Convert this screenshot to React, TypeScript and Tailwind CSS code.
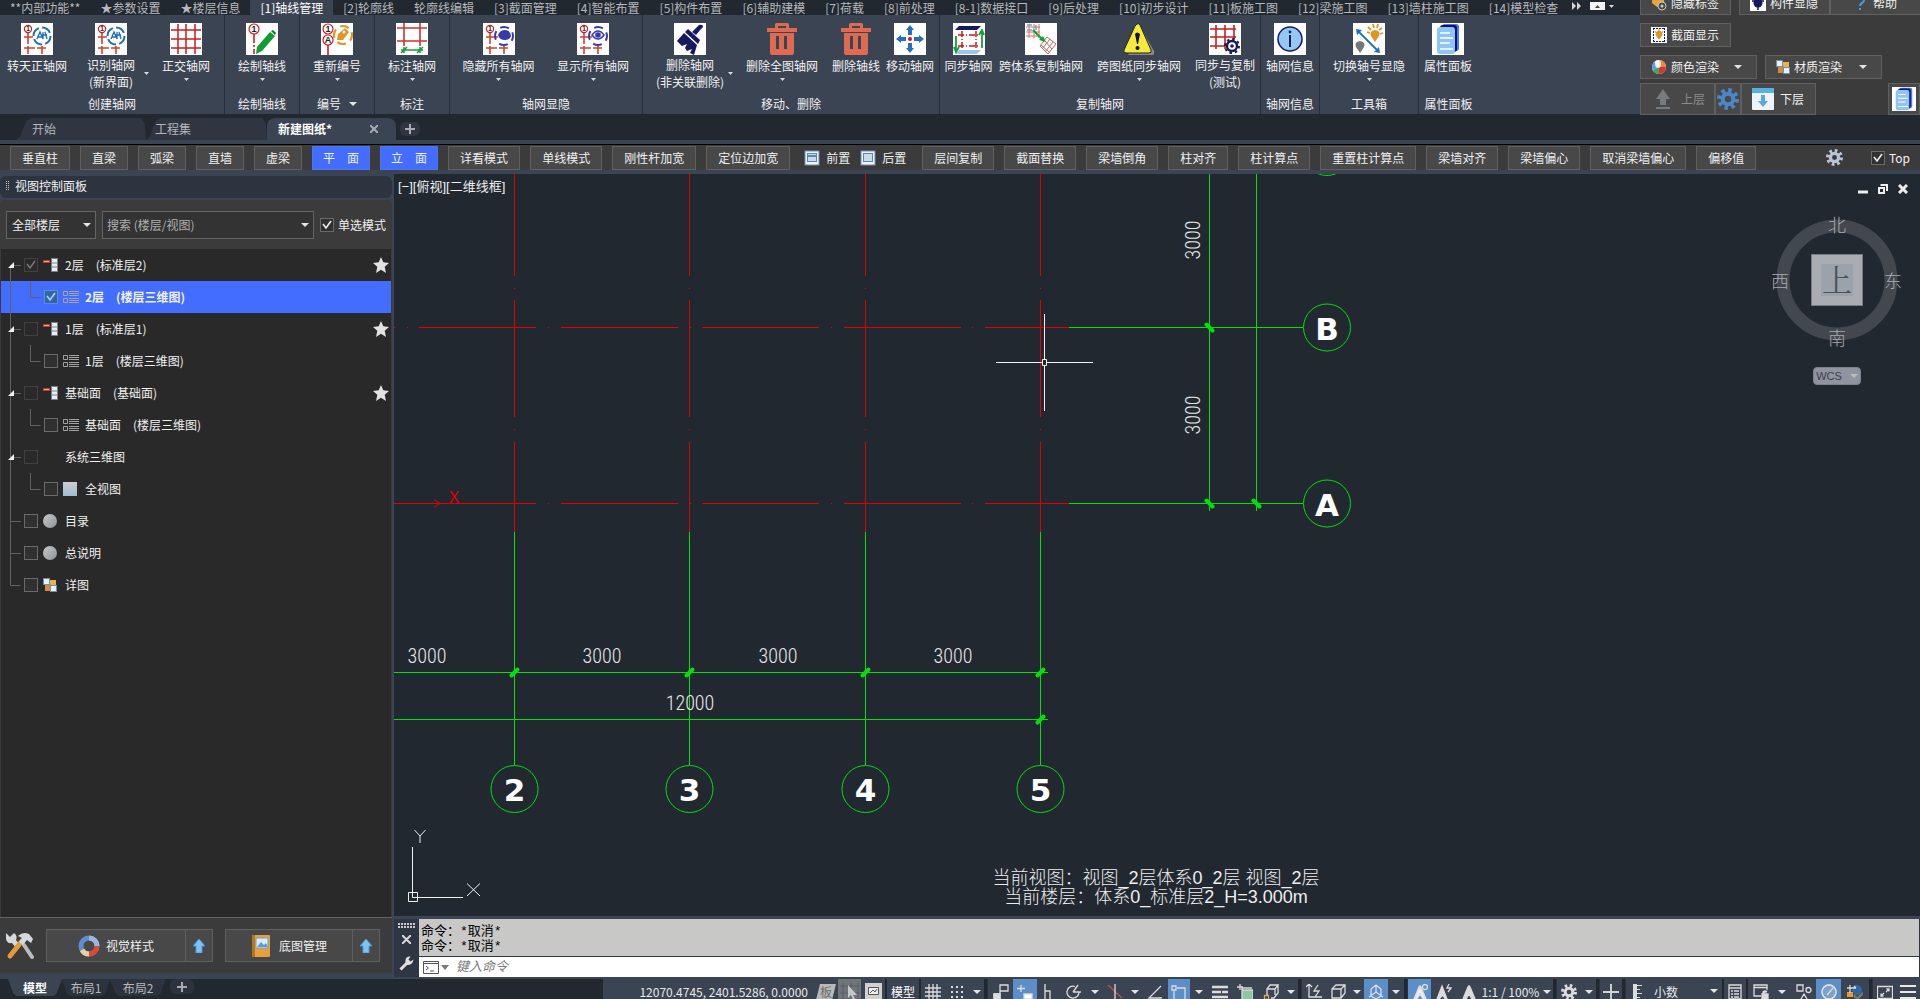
import { useState } from 'react';
import type { ReactNode } from 'react';

type IconName = keyof typeof ribbonIcons;

interface RibbonItem {
     label: string[];
     icon: IconName;
     width: string;
     menu?: boolean;
}

interface RibbonGroup {
     title: string;
     width: string;
     menu?: boolean;
     items: RibbonItem[];
}

interface TreeNode {
     label: string;
     kind: 'floor' | 'list' | 'none' | 'view' | 'sheet' | 'detail';
     child?: boolean;
     open?: boolean;
     checked?: boolean;
     dim?: boolean;
     star?: boolean;
     selected?: boolean;
     last?: boolean;
}

const Bubble = ({ x, y, r, text }: { x: number; y: number; r: number; text: string }) => (
     <>
          <circle cx={x} cy={y} r={r} fill="#fff" stroke="#cc1f1f" strokeWidth="1.2" />
          <text x={x} y={y + r / 1.6} textAnchor="middle" fontSize={r * 1.8} fontWeight="700" fill="#222" className="font-['Liberation_Sans',sans-serif]">{text}</text>
     </>
);

const AxisBase = () => (
     <>
          <path d="M7 9v12M3 14h9M7 23v8M3 25h9M12 25h2M16 25h9M21 23v8M13 14h2" stroke="#d2402f" strokeWidth="1.6" fill="none" />
          <Bubble x={7} y={6} r={3.6} text="1" />
     </>
);

const RecognizeIcon = () => (
     <>
          <AxisBase />
          <circle cx="21" cy="13" r="8.5" fill="#fff" stroke="#1d6fb8" strokeWidth="2" strokeDasharray="10 3.3" />
          <path d="M16 16l3-7 3 7M17 14h4M22 9v7M24 9l2 7M20 12h6" stroke="#1d6fb8" strokeWidth="1.3" fill="none" />
     </>
);

const Trash = () => (
     <>
          <path d="M9 5V1.5Q9 0 10.500 0h11Q23 0 23 1.500V5h8v4H1V5zM12 5h8V3h-8z" fill="#df6a52" fillRule="evenodd" />
          <path d="M4 10h24v20q0 2-2 2H6q-2 0-2-2zM10 13v13h3V13zM18 13v13h3V13z" fill="#df6a52" fillRule="evenodd" />
     </>
);

const DocIcon = () => (
     <>
          <rect x="10" y="1" width="17" height="27" rx="3" fill="#4776ff" />
          <rect x="8" y="2" width="17" height="27" rx="3" fill="#10126a" />
          <rect x="5" y="4" width="18" height="27" rx="3" fill="#8ec5f2" />
          <path d="M8 10h10M8 15h13M8 20h10M8 26h13" stroke="#fff" strokeWidth="1.500" />
     </>
);

const EyeRing = () => (
     <circle cx="21" cy="13" r="9" fill="none" stroke="#3b3ba8" strokeWidth="2" strokeDasharray="9 5.1" strokeDashoffset="4" />
);

const ribbonIcons = {
     recognize: <RecognizeIcon />,
     grid: <path d="M8 1v30M16 1v30M25 1v30M1 7h30M1 16h30M1 25h30" stroke="#c81e1e" strokeWidth="1.500" fill="none" />,
     draw: (
          <>
               <path d="M8 11v9M8 22v2M8 26v5" stroke="#cc1f1f" strokeWidth="1.600" />
               <Bubble x={8} y={6} r={5} text="1" />
               <path d="M24 9l5 4-13 15-6 3 1-7z" fill="#0f9d33" />
               <path d="M25 8l2-1 3 3-1 2z" fill="#0b7a27" />
          </>
     ),
     renumber: (
          <>
               <path d="M7 21v11" stroke="#cc1f1f" strokeWidth="1.600" />
               <circle cx="22" cy="12" r="9" fill="none" stroke="#dd9624" strokeWidth="2.200" strokeDasharray="9 5.1" strokeDashoffset="3" />
               <path d="M16 17l1-6 7-6 4 4-6 8z" fill="#dd9624" />
               <circle cx="23" cy="9" r="1.500" fill="#fff" />
               <Bubble x={7} y={6} r={5} text="1" />
               <Bubble x={7} y={17} r={5} text="A" />
          </>
     ),
     dimension: (
          <>
               <path d="M8 0v23M24 0v23M1 5h30M1 18h30" stroke="#d03030" strokeWidth="1.600" />
               <path d="M5 27h22M8 24v6M24 24v6M5 30l6-6M21 30l6-6" stroke="#12a035" strokeWidth="1.500" />
          </>
     ),
     hide: (
          <>
               <AxisBase />
               <EyeRing />
               <path d="M15 12q2-5 7-5t6 6q-1 4-6 4-6 0-7-5z" fill="#3b3ba8" />
          </>
     ),
     show: (
          <>
               <AxisBase />
               <EyeRing />
               <path d="M15 12q6-8 12 0-6 8-12 0z" fill="#fff" stroke="#3b3ba8" strokeWidth="1.500" />
               <circle cx="21" cy="12" r="2.800" fill="#3b3ba8" />
          </>
     ),
     brush: (
          <>
               <path d="M18 9l7-7q3-1 4 1 0 2-2 3l-5 6z" fill="#15195f" />
               <path d="M14 6l12 11-2 4L11 9z" fill="#15195f" />
               <path d="M10 10l13 12-3 10-4-2 2-4-5 2-2-3 2-4-5 2-5-5z" fill="#15195f" />
          </>
     ),
     trash: <Trash />,
     move: (
          <>
               <path d="M16 2l4 5h-2v5h-4V7h-2zM16 30l4-5h-2v-5h-4v5h-2zM2 16l5-4v2h5v4H7v2zM30 16l-5-4v2h-5v4h5v2z" fill="#2470bd" />
               <circle cx="16" cy="16" r="2" fill="#e01010" />
          </>
     ),
     sync: (
          <>
               <path d="M6 3h22l-4 4H2z" fill="#15195f" />
               <path d="M6 27h22l-4 4H2z" fill="#9ac9ea" />
               <path d="M9 8v18M23 8v18M5 12h22M5 23h22" stroke="#d01616" strokeWidth="1.500" strokeDasharray="6 2 1 2" />
               <path d="M3 13v15M1 24l2 5 3-5M29 25V8M26 12l3-5 2 5" stroke="#12a035" strokeWidth="1.800" fill="none" />
          </>
     ),
     copySystem: (
          <>
               <path d="M4 1v14M9 1v14M14 1v14M1 4h14M1 9h14M1 13h14" stroke="#d97361" strokeWidth="1" />
               <path d="M2 2h5M2 7h5M11 2v5" stroke="#62a8dc" strokeWidth="1.500" />
               <path d="M22 14l9 7-8 10-8-8zM19 17l8 9M25 16l-8 10M28 19l-8 10M16 22l8 7" stroke="#bb6c5a" fill="none" />
               <path d="M8 7l11 11" stroke="#12a035" strokeWidth="2" />
               <path d="M21 19l-7-2 4-4z" fill="#12a035" />
          </>
     ),
     warning: (
          <>
               <path d="M17 3l14 25q1 4-2 4H5z" fill="#8a8a82" />
               <path d="M14 1q2-1 3 1l11 25q1 3-2 3H3q-3 0-2-3L12 3z" fill="#f8ea3c" stroke="#222" strokeWidth="1" />
               <path d="M12 11q2-3 5 0l-2 10h-1z" fill="#111" />
               <circle cx="14.500" cy="25" r="2" fill="#111" />
          </>
     ),
     copyTest: (
          <>
               <path d="M7 2v24M16 2v24M25 2v14M1 6h26M1 14h26M1 23h15" stroke="#c81e1e" strokeWidth="1.600" />
               <circle cx="23" cy="23" r="5" fill="#fff" stroke="#15195f" strokeWidth="2.400" />
               <circle cx="23" cy="23" r="7" fill="none" stroke="#15195f" strokeWidth="2" strokeDasharray="2.500 3" />
               <circle cx="23" cy="23" r="1.800" fill="#15195f" />
          </>
     ),
     info: (
          <>
               <circle cx="16" cy="16" r="12" fill="#93c8f3" stroke="#15195f" strokeWidth="1.500" />
               <path d="M16 12v12" stroke="#15195f" strokeWidth="2" fill="none" />
               <circle cx="16" cy="9" r="1.400" fill="#15195f" />
          </>
     ),
     toggle: (
          <>
               <path d="M5 8l20 20" stroke="#1d6fb8" strokeWidth="1.800" />
               <path d="M3 6l6 1-5 5zM27 30l-6-1 5-5z" fill="#1d6fb8" />
               <path d="M22 19l-4-6q-2-5 4-6 6 1 4 6z" fill="#dd9624" />
               <path d="M14 9l3 1M15 4l3 3M20 1l1 4M25 1l-1 4M29 5l-3 2M30 10l-3 1" stroke="#dd9624" strokeWidth="1.800" />
               <path d="M7 30l-4-6q-2-5 4-6 6 1 4 6z" fill="#777" />
          </>
     ),
     doc: <DocIcon />,
};

const ribbonGroups: RibbonGroup[] = [
     {
          title: '创建轴网', width: 'w-[225px]', items: [
               { label: ['转天正轴网'], icon: 'recognize', width: 'w-[74px]' },
               { label: ['识别轴网', '(新界面)'], icon: 'recognize', width: 'w-[74px]', menu: true },
               { label: ['正交轴网'], icon: 'grid', width: 'w-[76px]', menu: true },
          ],
     },
     { title: '绘制轴线', width: 'w-[75px]', items: [{ label: ['绘制轴线'], icon: 'draw', width: 'w-[74px]', menu: true }] },
     { title: '编号', width: 'w-[75px]', menu: true, items: [{ label: ['重新编号'], icon: 'renumber', width: 'w-[74px]', menu: true }] },
     { title: '标注', width: 'w-[75px]', items: [{ label: ['标注轴网'], icon: 'dimension', width: 'w-[74px]', menu: true }] },
     {
          title: '轴网显隐', width: 'w-[193px]', items: [
               { label: ['隐藏所有轴网'], icon: 'hide', width: 'w-[97px]', menu: true },
               { label: ['显示所有轴网'], icon: 'show', width: 'w-[92px]', menu: true },
          ],
     },
     {
          title: '移动、删除', width: 'w-[297px]', items: [
               { label: ['删除轴网', '(非关联删除)'], icon: 'brush', width: 'w-[94px]', menu: true },
               { label: ['删除全图轴网'], icon: 'trash', width: 'w-[90px]', menu: true },
               { label: ['删除轴线'], icon: 'trash', width: 'w-[58px]' },
               { label: ['移动轴网'], icon: 'move', width: 'w-[50px]' },
          ],
     },
     {
          title: '复制轴网', width: 'w-[321px]', items: [
               { label: ['同步轴网'], icon: 'sync', width: 'w-[57px]' },
               { label: ['跨体系复制轴网'], icon: 'copySystem', width: 'w-[88px]' },
               { label: ['跨图纸同步轴网'], icon: 'warning', width: 'w-[108px]', menu: true },
               { label: ['同步与复制', '(测试)'], icon: 'copyTest', width: 'w-[64px]' },
          ],
     },
     { title: '轴网信息', width: 'w-[59px]', items: [{ label: ['轴网信息'], icon: 'info', width: 'w-[58px]' }] },
     { title: '工具箱', width: 'w-[99px]', items: [{ label: ['切换轴号显隐'], icon: 'toggle', width: 'w-[98px]', menu: true }] },
     { title: '属性面板', width: 'w-[59px]', items: [{ label: ['属性面板'], icon: 'doc', width: 'w-[58px]' }] },
];

const menuTabs = [
     '**内部功能**', '★参数设置', '★楼层信息', '[1]轴线管理', '[2]轮廓线', '轮廓线编辑', '[3]截面管理', '[4]智能布置',
     '[5]构件布置', '[6]辅助建模', '[7]荷载', '[8]前处理', '[8-1]数据接口', '[9]后处理', '[10]初步设计', '[11]板施工图',
     '[12]梁施工图', '[13]墙柱施工图', '[14]模型检查',
];

const toolsLeft = ['垂直柱', '直梁', '弧梁', '直墙', '虚梁', '平\u3000面', '立\u3000面', '详看模式', '单线模式', '刚性杆加宽', '定位边加宽'];
const toolsRight = ['层间复制', '截面替换', '梁墙倒角', '柱对齐', '柱计算点', '重置柱计算点', '梁墙对齐', '梁墙偏心', '取消梁墙偏心', '偏移值'];

const tree: TreeNode[] = [
     { label: '2层\u3000(标准层2)', kind: 'floor', open: true, checked: true, dim: true, star: true },
     { label: '2层\u3000(楼层三维图)', kind: 'list', child: true, checked: true, selected: true },
     { label: '1层\u3000(标准层1)', kind: 'floor', open: true, dim: true, star: true },
     { label: '1层\u3000(楼层三维图)', kind: 'list', child: true },
     { label: '基础面\u3000(基础面)', kind: 'floor', open: true, dim: true, star: true },
     { label: '基础面\u3000(楼层三维图)', kind: 'list', child: true },
     { label: '系统三维图', kind: 'none', open: true, dim: true },
     { label: '全视图', kind: 'view', child: true },
     { label: '目录', kind: 'sheet' },
     { label: '总说明', kind: 'sheet' },
     { label: '详图', kind: 'detail', last: true },
];

const Caret = ({ small }: { small?: boolean }) => (
     small
          ? <svg width="5" height="3" viewBox="0 0 5 3" className="shrink-0"><path d="M0 0h5L2.500 3z" fill="#d8d8d8" /></svg>
          : <svg width="8" height="4" viewBox="0 0 8 4" className="shrink-0"><path d="M0 0h8L4 4z" fill="#e4e4e4" /></svg>
);

const Gear = ({ size, color, hole }: { size: number; color: string; hole: string }) => (
     <svg width={size} height={size} viewBox="0 0 24 24" className="shrink-0">
          <circle cx="12" cy="12" r="9.500" fill="none" stroke={color} strokeWidth="5" strokeDasharray="3.730 3.730" />
          <circle cx="12" cy="12" r="8" fill={color} />
          <circle cx="12" cy="12" r="3.500" fill={hole} />
     </svg>
);

const Plus = () => (
     <svg width="10" height="10" viewBox="0 0 10 10"><path d="M5 0v10M0 5h10" stroke="#a8acb2" strokeWidth="2" /></svg>
);

const CheckBox = ({ id, label, checked, dim, blue }: { id: string; label?: string; checked?: boolean; dim?: boolean; blue?: boolean }) => (
     <span className="relative flex size-[14px] shrink-0">
          <input
               id={id}
               type="checkbox"
               aria-label={label}
               defaultChecked={checked}
               className={`peer size-[14px] appearance-none border ${blue ? 'border-[#5c8fd0] bg-[#3265ad]' : dim ? 'border-[#414141] bg-[#2b2929]' : 'border-[#6a6a6a] bg-[#303030]'}`}
          />
          <svg viewBox="0 0 14 14" className="pointer-events-none absolute inset-0 hidden size-[14px] peer-checked:block">
               <path d="M3 6l3 4 5-7" fill="none" stroke={dim ? '#777' : blue ? '#a9d4ff' : '#f0f0f0'} strokeWidth="1.600" />
          </svg>
     </span>
);

function RibbonButton({ item }: { item: RibbonItem }) {
     const twoLines = item.label.length > 1;
     const bare = item.icon === 'trash' || item.icon === 'warning';
     return (
          <button className={`relative flex shrink-0 flex-col items-center ${item.width}`}>
               <svg width="32" height="32" viewBox="0 0 32 32" className={bare ? '' : 'bg-white'}>{ribbonIcons[item.icon]}</svg>
               <span className={`flex flex-col items-center whitespace-nowrap ${twoLines ? 'mt-px leading-[17px]' : 'mt-[2px] leading-[18px]'}`}>
                    {item.label.map((line) => <span key={line}>{line}</span>)}
               </span>
               {item.menu && !twoLines && <span className="mt-[3px]"><Caret small /></span>}
               {item.menu && twoLines && <span className={`absolute top-[49px] ${item.icon === 'brush' ? 'right-[4px]' : '-right-[1px]'}`}><Caret small /></span>}
          </button>
     );
}

function Ribbon() {
     const [active, setActive] = useState('[1]轴线管理');
     return (
          <div className="flex min-w-0 flex-1 flex-col">
               <div className="flex h-[15px] items-start overflow-hidden bg-[#212830] text-[#b6b9bd]">
                    {menuTabs.map((tab) => (
                         <button
                              key={tab}
                              onClick={() => setActive(tab)}
                              className={`-mt-px h-4 shrink-0 px-[10px] leading-[13px] whitespace-nowrap ${active === tab ? 'bg-[#3b4453] text-white' : ''}`}
                         >
                              {tab}
                         </button>
                    ))}
                    <svg width="48" height="15" viewBox="0 0 48 15" className="ml-1 shrink-0">
                         <path d="M0 2l4 4-4 4zM5 2l4 4-4 4z" fill="#d8d8d8" />
                         <rect x="18" y="2" width="15" height="8" fill="#f2f2f2" />
                         <path d="M23 8h5l-2.500-3z" fill="#444" />
                         <path d="M37 5h5l-2.500 3z" fill="#d8d8d8" />
                    </svg>
               </div>
               <div className="flex h-[99px] bg-[#3b4453]">
                    {ribbonGroups.map((group, index) => (
                         <div key={group.title} className={`flex shrink-0 flex-col pt-2 ${group.width} ${index < ribbonGroups.length - 1 ? 'border-r border-[#262d37]' : ''}`}>
                              <div className="flex h-[72px]">
                                   {group.items.map((item) => <RibbonButton key={item.label[0]} item={item} />)}
                              </div>
                              <div className="flex items-center justify-center gap-2 leading-[18px]">
                                   {group.title}
                                   {group.menu && <Caret />}
                              </div>
                         </div>
                    ))}
               </div>
          </div>
     );
}

const panelButton = 'flex shrink-0 items-center border border-[#606060] bg-[#484848]';

function SideTools() {
     return (
          <div className="flex h-[115px] w-[280px] shrink-0 flex-col overflow-hidden bg-[#3b3b3b]">
               <div className="flex h-[15px] items-end gap-2">
                    <button className={`${panelButton} h-6 w-[91px] gap-1 pl-[10px]`}>
                         <svg width="16" height="16" viewBox="0 0 16 16"><path d="M1 0h12v8L6 12 1 8z" fill="#e3a53c" /><circle cx="11" cy="11" r="4" fill="#484848" stroke="#c9c9c9" /><circle cx="11" cy="11" r="1.500" fill="#c9c9c9" /></svg>
                         隐藏标签
                    </button>
                    <div className="flex">
                         <button className={`${panelButton} h-6 w-[91px] gap-1 pl-[10px]`}>
                              <svg width="16" height="16" viewBox="0 0 16 16" className="bg-white"><circle cx="8" cy="8" r="4.500" fill="#15195f" /><path d="M8 1v14M2 6h12" stroke="#15195f" strokeWidth="1.500" /></svg>
                              构件显隐
                         </button>
                         <button className={`${panelButton} h-6 w-[91px] gap-2 pl-6`}>
                              <svg width="10" height="16" viewBox="0 0 10 16" fill="none"><path d="M1 5Q1 1 5 1t4 4q0 2-2 3-2 1-2 3M5 13v2" stroke="#4a9ae0" strokeWidth="2" /></svg>
                              帮助
                         </button>
                    </div>
               </div>
               <div className="mt-2 flex h-6">
                    <button className={`${panelButton} w-[91px] gap-1 pl-[10px]`}>
                         <svg width="16" height="16" viewBox="0 0 16 16" className="bg-white"><path d="M2.500 1v14M13.500 1v14M2 1.500h12M2 14.500h12" stroke="#15195f" strokeDasharray="2 1" /><path d="M8 12L5 8q0-4 3-4t3 4zM4 4l1 2M8 2v3M12 4l-1 2" fill="#dd9624" stroke="#dd9624" /></svg>
                         截面显示
                    </button>
               </div>
               <div className="mt-2 flex h-6 gap-2">
                    <button className={`${panelButton} w-[117px] gap-1 pl-[10px]`}>
                         <svg width="16" height="16" viewBox="0 0 16 16"><circle cx="8" cy="8" r="7" fill="#e8eef4" /><path d="M8 8L8 1a7 7 0 0 1 7 7z" fill="#e98a3a" /><path d="M8 8h7a7 7 0 0 1-7 7z" fill="#d33" /><path d="M8 8v7a7 7 0 0 1-6-4z" fill="#3fa65a" /><path d="M8 8L2 11a7 7 0 0 1 1-8z" fill="#5d9bd8" /><ellipse cx="7" cy="5" rx="3" ry="4" fill="#fff" opacity=".8" /></svg>
                         <span className="flex-1 text-left">颜色渲染</span>
                         <span className="mr-[14px]"><Caret /></span>
                    </button>
                    <button className={`${panelButton} w-[117px] gap-1 pl-[10px]`}>
                         <BlocksIcon />
                         <span className="flex-1 text-left">材质渲染</span>
                         <span className="mr-[14px]"><Caret /></span>
                    </button>
               </div>
               <div className="mt-1 flex h-8 items-stretch">
                    <button className={`${panelButton} w-[75px] gap-2 border-[#4c4c4c] bg-[#414141] pl-3 text-[#8a8a8a]`}>
                         <svg width="20" height="20" viewBox="0 0 20 20"><path d="M10 0l7 10h-4v6H7v-6H3z" fill="#777a7e" /><path d="M3 19h14" stroke="#777a7e" strokeWidth="2" /></svg>
                         上层
                    </button>
                    <button aria-label="楼层设置" className={`${panelButton} w-[26px] justify-center`}><Gear size={22} color="#4c86c6" hole="#484848" /></button>
                    <button className={`${panelButton} w-[75px] gap-[6px] pl-[10px]`}>
                         <svg width="22" height="22" viewBox="0 0 22 22"><rect width="22" height="22" rx="1" fill="#eef4fa" /><path d="M0 0h22v5H0z" fill="#57b2e0" /><path d="M9 7h4v6h3l-5 6-5-6h3z" fill="#5ba7dc" /></svg>
                         下层
                    </button>
                    <button aria-label="属性面板" className={`${panelButton} ml-auto w-8 justify-center`}>
                         <svg width="24" height="24" viewBox="0 0 32 32" className="bg-white"><DocIcon /></svg>
                    </button>
               </div>
          </div>
     );
}

const BlocksIcon = () => (
     <svg width="14" height="14" viewBox="0 0 14 14" className="shrink-0">
          <rect x="6" y="2" width="7" height="7" fill="#e9b44c" />
          <rect x="2" y="6" width="6" height="7" fill="#d68a3c" />
          <rect x="0.500" y="0.500" width="6" height="6" fill="#eaf1f8" stroke="#6f8fb8" />
          <rect x="7.500" y="7.500" width="6" height="6" fill="#eaf1f8" stroke="#6f8fb8" />
     </svg>
);

function FileTabs() {
     const shape = '[clip-path:polygon(0_100%,3%_85%,8%_12%,12%_0,96%_0,99%_20%,100%_100%)]';
     return (
          <div className="flex h-[25px] shrink-0 items-end bg-[#212830] pl-4">
               <button className={`h-[22px] w-[130px] bg-[#2f3641] pl-4 text-left text-[#b4b7bb] ${shape}`}>开始</button>
               <button className={`h-[22px] w-[121px] bg-[#2f3641] pl-[9px] text-left text-[#b4b7bb] ${shape}`}>工程集</button>
               <div className="flex h-[22px] w-[129px] items-center rounded-t-lg bg-[#3b4453] pl-[11px]">
                    <button className="flex-1 text-left font-bold text-white">新建图纸*</button>
                    <button aria-label="关闭" className="mr-[18px]">
                         <svg width="8" height="8" viewBox="0 0 8 8"><path d="M0 0l8 8M8 0L0 8" stroke="#a8acb2" strokeWidth="2" /></svg>
                    </button>
               </div>
               <button aria-label="新建" className="mb-1 ml-1 flex h-[14px] w-5 items-center justify-center rounded-md bg-[#2f3641]"><Plus /></button>
          </div>
     );
}

function ToolBar() {
     const normal = 'h-6 shrink-0 border border-[#606060] bg-[#484848] px-[11px] whitespace-nowrap';
     const picked = 'h-6 shrink-0 border border-[#4f74ee] bg-[#426dff] px-[10px] whitespace-nowrap';
     return (
          <div className="flex h-[26px] shrink-0 items-center overflow-hidden border-t border-black bg-[#3b3b3b] pl-[10px]">
               <div className="flex shrink-0 gap-[10px]">
                    {toolsLeft.map((tool) => <button key={tool} className={tool.includes('\u3000') ? picked : normal}>{tool}</button>)}
               </div>
               {['前置', '后置'].map((tool, index) => (
                    <button key={tool} className={`flex shrink-0 items-center gap-[6px] ${index === 0 ? 'ml-[14px]' : 'ml-[10px]'}`}>
                         <svg width="16" height="16" viewBox="0 0 16 16">
                              <rect x="1" y="1" width="14" height="14" fill="#f2f5f8" stroke="#6f8fb8" />
                              <rect x="3.500" y="3.500" width="9" height="8" fill="#c9dcec" stroke="#5b86b5" />
                              {index === 0 && <path d="M4 6h8" stroke="#5b86b5" strokeWidth="2" />}
                         </svg>
                         {tool}
                    </button>
               ))}
               <div className="ml-4 flex shrink-0 gap-[10px]">
                    {toolsRight.map((tool) => <button key={tool} className={normal}>{tool}</button>)}
               </div>
               <button aria-label="设置" className="ml-auto"><Gear size={17} color="#b9c4d6" hole="#3b3b3b" /></button>
               <span className="mr-[10px] ml-7 flex shrink-0 items-center gap-1">
                    <CheckBox id="top" checked />
                    <label htmlFor="top">Top</label>
               </span>
          </div>
     );
}

function NodeIcon({ kind }: { kind: TreeNode['kind'] }) {
     if (kind === 'floor') {
          return (
               <svg width="15" height="14" viewBox="0 0 15 14">
                    <path d="M0 3.500h7" stroke="#c23a2b" strokeWidth="3" /><path d="M1 3.500h5" stroke="#e8b07a" />
                    <path d="M8.500 .5h6v13h-6zM8.500 5h6M8.500 9h6" fill="#e9eef2" stroke="#77828e" />
               </svg>
          );
     }
     if (kind === 'list') {
          return (
               <svg width="16" height="14" viewBox="0 0 16 14">
                    <path d="M.5 1.500h4v4h-4zM.5 8.500h4v4h-4zM6 1.500h10M6 3.500h10M6 5.500h10M6 8.500h10M6 10.500h10M6 12.500h10" fill="none" stroke="#a3a3a3" />
               </svg>
          );
     }
     if (kind === 'view') {
          return <span className="block size-[14px] bg-linear-to-b from-[#cdcdd2] to-[#9dbdd0]" />;
     }
     if (kind === 'sheet') {
          return <span className="block size-[14px] rounded-full bg-linear-to-br from-[#c9c9c9] to-[#8f9297]" />;
     }
     if (kind === 'detail') {
          return <BlocksIcon />;
     }
     return <span className="block w-[15px]" />;
}

function TreeRow({ node }: { node: TreeNode }) {
     return (
          <li className={`flex h-8 items-center ${node.selected ? 'bg-[#426dff] font-bold' : ''}`}>
               {node.child ? (
                    <svg width="43" height="32" viewBox="0 0 43 32" className="shrink-0">
                         <path d="M9.500 0v32M29.500 0v16.500h10" fill="none" stroke="#626262" />
                    </svg>
               ) : (
                    <svg width="23" height="32" viewBox="0 0 23 32" className="shrink-0">
                         <path d={node.last ? 'M9.500 0v16.500h10' : node.star && node.checked ? 'M9.500 16v16M10 16.500h10' : 'M9.500 0v32M10 16.500h10'} fill="none" stroke="#626262" />
                         {node.open && <path d="M7 19h6v-6z" fill="#f0f0f0" />}
                    </svg>
               )}
               <CheckBox id={`node-${node.label}`} label={node.label} checked={node.checked} dim={node.dim} blue={node.selected} />
               <span className="ml-[5px] flex w-[22px] shrink-0"><NodeIcon kind={node.kind} /></span>
               <span className="flex-1">{node.label}</span>
               {node.star && (
                    <svg width="16" height="16" viewBox="0 0 16 16" className="mr-[2px] shrink-0">
                         <path d="M8 0l2.300 5.300 5.700.6-4.300 3.800 1.300 6.200L8 12.800 3 15.900l1.300-6.200L0 5.900l5.700-.6z" fill="#e2e2e2" />
                    </svg>
               )}
          </li>
     );
}

function ViewPanel() {
     return (
          <aside className="flex w-[392px] shrink-0 flex-col pt-[2px] pb-1">
               <div className="flex h-[22px] shrink-0 items-center gap-[6px] rounded-md bg-[#2d3440] pb-[2px] pl-[6px]">
                    <svg width="3" height="10" viewBox="0 0 3 10"><path d="M.5 0v10M2.500 0v10" stroke="#c8c8c8" strokeDasharray="1 1" /></svg>
                    视图控制面板
               </div>
               <div className="mt-[2px] flex min-h-0 flex-1 flex-col rounded-t-sm bg-[#3b3b3b]">
                    <div className="flex h-[49px] shrink-0 items-center gap-[6px] pl-[6px]">
                         <div className="relative w-[90px]">
                              <select aria-label="楼层" className="h-7 w-full appearance-none border border-[#646464] bg-[#333] pl-[5px]">
                                   <option>全部楼层</option>
                              </select>
                              <span className="pointer-events-none absolute top-3 right-[5px]"><Caret /></span>
                         </div>
                         <div className="relative w-[212px]">
                              <input aria-label="搜索" placeholder="搜索 (楼层/视图)" className="h-7 w-full border border-[#646464] bg-[#333] pl-1 placeholder:text-[#b0b0b0]" />
                              <span className="absolute top-3 right-[5px]"><Caret /></span>
                         </div>
                         <span className="flex items-center gap-1">
                              <CheckBox id="single" checked />
                              <label htmlFor="single">单选模式</label>
                         </span>
                    </div>
                    <ul className="mx-px flex-1 bg-[#292929]">
                         {tree.map((node) => <TreeRow key={node.label} node={node} />)}
                    </ul>
                    <div className="flex h-14 shrink-0 items-center border-t border-[#646464] pl-1">
                         <button aria-label="工具">
                              <svg width="31" height="28" viewBox="0 0 31 28">
                                   <path d="M20 13l8 12" stroke="#b8bcc2" strokeWidth="4" strokeLinecap="round" />
                                   <path d="M2 1l4 4 4-4q4 3 2 7l4 5-4 3-4-5q-5 1-6-4z" fill="#d5d9de" />
                                   <path d="M18 9L6 24" stroke="#e59a3a" strokeWidth="5" strokeLinecap="round" />
                                   <path d="M14 4q5-5 11-2l4 5-2 4-4-3-4 5-4-3 3-4z" fill="#d5d9de" />
                              </svg>
                         </button>
                         <div className="ml-[11px] flex h-[33px] w-[167px] border border-[#606060] bg-[#484848]">
                              <button className="flex flex-1 items-center justify-center gap-[6px]">
                                   <svg width="22" height="22" viewBox="0 0 22 22" fill="none" strokeWidth="5">
                                        <circle cx="11" cy="11" r="8" stroke="#5d8fd0" />
                                        <path d="M11 3a8 8 0 0 1 8 8" stroke="#9db7dc" />
                                        <path d="M19 11a8 8 0 0 1-8 8" stroke="#d84a35" />
                                        <path d="M11 19a8 8 0 0 1-7-4" stroke="#ead0a0" />
                                   </svg>
                                   视觉样式
                              </button>
                              <button aria-label="更多样式" className="flex w-[27px] items-center justify-center border-l border-[#606060]"><UpArrow /></button>
                         </div>
                         <div className="ml-3 flex h-[33px] w-[155px] border border-[#606060] bg-[#484848]">
                              <button className="flex flex-1 items-center justify-center gap-2">
                                   <svg width="20" height="22" viewBox="0 0 20 22"><rect x="1" width="18" height="22" rx="1" fill="#e6a03c" /><path d="M1 0h3v22H1z" fill="#b87420" /><rect x="5" y="3" width="12" height="10" fill="#dcecf6" stroke="#6aa0c8" /><path d="M6 12l4-5 3 3 2-2 2 4z" fill="#5a9bd0" /></svg>
                                   底图管理
                              </button>
                              <button aria-label="更多底图" className="flex w-[27px] items-center justify-center border-l border-[#606060]"><UpArrow /></button>
                         </div>
                    </div>
               </div>
          </aside>
     );
}

const UpArrow = () => (
     <svg width="12" height="14" viewBox="0 0 12 14"><path d="M6 0l6 7H9v7H3V7H0z" fill="#7fc2f2" stroke="#4f98d6" /></svg>
);

const columns = [{ x: 514.5, n: '2' }, { x: 689.5, n: '3' }, { x: 865.5, n: '4' }, { x: 1040.5, n: '5' }];
const rows = [{ y: 327.5, n: 'B' }, { y: 503.5, n: 'A' }];

const dimFont = "font-['Liberation_Sans_Narrow','Roboto_Condensed',sans-serif] text-[20px] font-light";
const axisFont = "font-['DejaVu_Sans',sans-serif] text-[31px] font-bold";

// World coordinates follow the window origin, shifted to the viewport corner
function Drawing() {
     return (
          <svg className="absolute inset-0 size-full" fill="none">
               <g transform="translate(-394 -174)">
                    <g stroke="#e00000">
                         {columns.map(({ x }) => (
                              <path key={x} d={`M${x} 174V276M${x} 288v1M${x} 300V417M${x} 429v1M${x} 442V532`} />
                         ))}
                         {rows.map(({ y }, index) => (
                              <path key={y} d={`${index ? `M394 ${y}H536` : `M394 ${y}h1M407 ${y}h1M419 ${y}H536`}M548 ${y}h1M561 ${y}H678M690 ${y}h1M702 ${y}H819M831 ${y}h1M844 ${y}H961M972 ${y}h1M985 ${y}H1069`} />
                         ))}
                         <path d="M434 499.500l6 4-6 4" />
                    </g>
                    <text x="454" y="503" textAnchor="middle" fill="#e00000" className="font-['Liberation_Sans',sans-serif] text-[16px]">X</text>

                    <g stroke="#00e00a">
                         {columns.map(({ x }) => <path key={x} d={`M${x} 532V765`} />)}
                         {rows.map(({ y }) => <path key={y} d={`M1069 ${y}H1303`} />)}
                         <path d="M1209.500 174V511M1256.500 174V511M394 672.500H1048M394 719.500H1048" />
                         {columns.map(({ x }) => <circle key={x} cx={x} cy="789" r="23.500" />)}
                         {rows.map(({ y }) => <circle key={y} cx="1327" cy={y} r="23.500" />)}
                         <circle cx="1327" cy="152" r="23.500" />
                    </g>
                    <g stroke="#00e00a" strokeWidth="4" strokeLinecap="round">
                         {columns.map(({ x }) => <path key={x} d={`M${x - 3} 675.500l6-6`} />)}
                         <path d="M1037.500 722.500l6-6M1206.500 324.500l6 6M1206.500 500.500l6 6M1253.500 500.500l6 6" />
                    </g>

                    <g fill="#fff" textAnchor="middle" className={axisFont}>
                         {columns.map(({ x, n }) => <text key={n} x={x} y="801">{n}</text>)}
                         {rows.map(({ y, n }) => <text key={n} x="1327" y={y + 12}>{n}</text>)}
                    </g>
                    <g fill="#e8e8e8" textAnchor="middle" className={dimFont}>
                         {[427, 602, 778, 953].map((x) => <text key={x} x={x} y="663">3000</text>)}
                         <text x="690" y="710">12000</text>
                         <text x="1200" y="240" transform="rotate(-90 1200 240)">3000</text>
                         <text x="1200" y="415" transform="rotate(-90 1200 415)">3000</text>
                    </g>

                    <g stroke="#f0f0f0">
                         <path d="M1044.500 314V359M1044.500 366V411M996 362.500H1042M1047 362.500H1093M1042.500 359.500h4v6h-4z" />
                         <path d="M412.500 847V897.500H463M408.500 892.500h9v9h-9z" />
                         <path d="M414.500 830l5.500 6 5.500-6M420 836v7M467 883.500l13 12.500M480 883.500L467 896" />
                    </g>

                    <g fill="#eeeeee" textAnchor="middle" className="font-['Liberation_Sans','Noto_Sans_CJK_SC',sans-serif] text-[18px] font-light">
                         <text x="1156" y="884">当前视图：视图_2层体系0_2层 视图_2层</text>
                         <text x="1156" y="903">当前楼层：体系0_标准层2_H=3.000m</text>
                    </g>
               </g>
          </svg>
     );
}

function ViewCube() {
     return (
          <div className="absolute top-9 right-[14px] flex flex-col items-center">
               <svg width="138" height="140" viewBox="0 0 138 140">
                    <circle cx="69" cy="70" r="54" fill="none" stroke="#43474e" strokeWidth="13" />
                    <rect x="43.500" y="44.500" width="51" height="51" fill="#a9adb1" stroke="#777b80" />
                    <rect x="53" y="54" width="32" height="32" fill="#9ba3aa" />
                    <g fill="#a9abae" textAnchor="middle" className="font-['Noto_Sans_CJK_SC',sans-serif] text-[18px] font-light">
                         <text x="69" y="22">北</text>
                         <text x="69" y="135">南</text>
                         <text x="12" y="78">西</text>
                         <text x="125" y="78">东</text>
                    </g>
                    <text x="69" y="81" textAnchor="middle" fill="#4d5256" className="font-['Noto_Serif_CJK_SC','Noto_Sans_CJK_SC',serif] text-[30px]">上</text>
               </svg>
               <button className="mt-[17px] flex h-[18px] w-12 items-center justify-center gap-2 rounded border border-[#7d8188] bg-[#9094a0] font-['Liberation_Sans',sans-serif] text-[11px] text-[#3c4048]">
                    WCS
                    <svg width="8" height="4" viewBox="0 0 8 4"><path d="M0 0h8L4 4z" fill="#b8bbc2" /></svg>
               </button>
          </div>
     );
}

function Viewport() {
     return (
          <div className="relative min-h-0 flex-1 overflow-hidden bg-[#212830]">
               <Drawing />
               <div className="absolute top-[3px] left-1 flex font-['Liberation_Sans','Noto_Sans_CJK_SC',sans-serif] text-[13px] leading-5">
                    <button>[−]</button>
                    <button>[俯视]</button>
                    <button>[二维线框]</button>
               </div>
               <div className="absolute top-[10px] right-3 flex gap-[10px]">
                    <button aria-label="最小化"><svg width="10" height="10" viewBox="0 0 10 10"><path d="M0 8h10" stroke="#eee" strokeWidth="3" /></svg></button>
                    <button aria-label="还原"><svg width="10" height="10" viewBox="0 0 10 10"><path d="M2.500 1h6.500v6M1 4h5v5H1z" fill="none" stroke="#eee" strokeWidth="2" /></svg></button>
                    <button aria-label="关闭视口"><svg width="10" height="10" viewBox="0 0 10 10"><path d="M1 1l8 8M9 1L1 9" stroke="#eee" strokeWidth="3" /></svg></button>
               </div>
               <ViewCube />
          </div>
     );
}

function CommandLine() {
     return (
          <div className="mt-[3px] flex h-[58px] shrink-0 bg-[#2e3643]">
               <div className="flex w-[25px] shrink-0 flex-col items-center pt-1">
                    <svg width="17" height="5" viewBox="0 0 17 5"><path d="M0 1h17M0 4h17" stroke="#c8ccd0" strokeWidth="2" strokeDasharray="2 1" /></svg>
                    <button aria-label="关闭命令行" className="mt-[7px]"><svg width="9" height="9" viewBox="0 0 9 9"><path d="M0 0l9 9M9 0L0 9" stroke="#d8d8d8" strokeWidth="2" /></svg></button>
                    <button aria-label="自定义" className="mt-3">
                         <svg width="15" height="15" viewBox="0 0 15 15"><path d="M1.500 13.500L8 7" stroke="#e0e0e0" strokeWidth="3" /><path d="M14.500 3.500l-3 2-2-2 2-3Q7 0 6.500 4t2 5q5 0 6-5.500z" fill="#e0e0e0" /></svg>
                    </button>
               </div>
               <div className="mr-px flex flex-1 flex-col gap-px font-['Liberation_Mono','Noto_Sans_CJK_SC',monospace] text-[13px] text-black">
                    <div className="h-[37px] bg-[#c8c8c6] pt-[5px] pl-[2px] leading-[15px]">
                         <p>命令：*取消*</p>
                         <p>命令：*取消*</p>
                    </div>
                    <div className="flex h-5 items-center bg-white pl-1">
                         <svg width="16" height="13" viewBox="0 0 16 13"><path d="M.5.5h15v12H.5zM0 2.500h16" fill="none" stroke="#555" /><path d="M3 5l2.500 2L3 9M7 10h4" fill="none" stroke="#555" /></svg>
                         <svg width="8" height="5" viewBox="0 0 8 5" className="ml-[2px]"><path d="M0 0h8L4 5z" fill="#777" /></svg>
                         <input aria-label="命令" placeholder="键入命令" className="ml-[7px] h-5 flex-1 outline-none placeholder:text-[#7a7a7a] placeholder:italic" />
                    </div>
               </div>
          </div>
     );
}

function Cell({ w, blue, label, children }: { w: string; blue?: boolean; label: string; children: ReactNode }) {
     return (
          <button aria-label={label} className={`flex h-[25px] shrink-0 items-center justify-center ${w} ${blue ? 'bg-[#5c8fc8]' : ''}`}>
               {children}
          </button>
     );
}

const Glyph = ({ d, extra }: { d: string; extra?: ReactNode }) => (
     <svg width="16" height="16" viewBox="0 0 16 16" fill="none" stroke="#dcdcdc" strokeWidth="1.300">
          {extra}
          <path d={d} />
     </svg>
);

const Sep = () => <span className="h-[25px] w-1 shrink-0 border-r border-[#2b323d] bg-[#212830]" />;
const CaretCell = ({ w, label }: { w: string; label: string }) => <Cell w={w} label={label}><Caret /></Cell>;

function StatusBar() {
     const compass = 'M8 1v5';
     return (
          <div className="flex h-5 min-w-0 flex-1 items-start justify-end overflow-hidden">
               <div className="flex bg-[#3b4453] text-[#e8e8e8]">
                    <span className="w-[210px] shrink-0 pr-[5px] text-right leading-[25px]">12070.4745, 2401.5286, 0.0000</span>
                    <Cell w="w-[25px]" label="板">
                         <svg width="20" height="16" viewBox="0 0 20 16"><path d="M4 0h16l-4 16H0z" fill="#b9bab8" /><text x="10" y="13" textAnchor="middle" fontSize="12" fill="#6a6d70">板</text></svg>
                    </Cell>
                    <Cell w="w-[23px] bg-[#70757a]" label="光标">
                         <svg width="22" height="18" viewBox="0 0 22 18"><path d="M1 3h20M1 10h20M1 16h20M4 0v18M12 0v18M19 0v18" stroke="#5a5f66" /><path d="M9 2v13l3-3 2 5 2-1-2-4h4z" fill="#c5c8cb" /></svg>
                    </Cell>
                    <Cell w="w-[24px]" label="图纸"><svg width="17" height="18" viewBox="0 0 17 18"><path d="M0 0h17v18H0z" fill="#d0d1cf" /><path d="M3.500 4.500h10v7h-10z" fill="#eee" stroke="#555" /><path d="M5 10l3-3 2 2 2-3" stroke="#555" fill="none" /></svg></Cell>
                    <Cell w="w-[36px] border-x-2 border-[#212830] text-white" label="模型空间">模型</Cell>
                    <Cell w="w-[23px]" label="栅格"><Glyph d="M4 0v16M8 0v16M12 0v16M0 4h16M0 8h16M0 12h16" /></Cell>
                    <Cell w="w-[26px]" label="捕捉"><svg width="14" height="14" viewBox="0 0 14 14"><path d="M1 2h12M1 7h12M1 12h12" stroke="#dcdcdc" strokeWidth="2" strokeDasharray="2 3" /></svg></Cell>
                    <CaretCell w="w-[14px]" label="捕捉选项" />
                    <Sep />
                    <Cell w="w-[25px]" label="推断约束"><Glyph d="M7 13V1h8v6H7M1 10h6v5H1z" extra={<path d="M1 10h6v5H1z" fill="#dcdcdc" />} /></Cell>
                    <Cell w="w-[24px]" blue label="动态输入"><Glyph d="M4 1v7M0 4.500h8" extra={<path d="M7 10h8v5H7z" fill="#fff" />} /></Cell>
                    <Cell w="w-[20px]" label="正交"><Glyph d="M6 0v15M6 7h5v9" /></Cell>
                    <Cell w="w-[32px]" label="极轴追踪"><Glyph d="M14 8a6 6 0 1 1-4-5.500M8 8l5-7M8 8h8" /></Cell>
                    <CaretCell w="w-[12px]" label="极轴选项" />
                    <Cell w="w-[27px]" label="等轴测"><Glyph d="M8 0v16" extra={<path d="M1 1l14 13" stroke="#c05545" />} /></Cell>
                    <CaretCell w="w-[13px]" label="等轴测选项" />
                    <Cell w="w-[27px]" label="对象追踪"><Glyph d="M14 2L2 14h13" /></Cell>
                    <Cell w="w-[22px]" blue label="对象捕捉"><Glyph d="M1 2h4v4H1zM6 4h8v12M3 7v9" /></Cell>
                    <CaretCell w="w-[18px]" label="对象捕捉选项" />
                    <Cell w="w-[24px]" label="线宽"><svg width="16" height="14" viewBox="0 0 16 14"><path d="M0 2h16M0 7h9M10 7h6M0 12h16" stroke="#dcdcdc" strokeWidth="2.500" /></svg></Cell>
                    <Cell w="w-[26px]" label="选择循环"><Glyph d="M3 0v6M0 3h6M5 6V4h10" extra={<path d="M5 6h11v10H5z" fill="#8cc7a4" />} /></Cell>
                    <Cell w="w-[25px]" label="三维捕捉"><Glyph d="M4 5l3-4h8l-3 4H4v6M15 1v8l-4 5H8M12 5v6" extra={<path d="M1.500 11.500h4v4h-4z" stroke="#e0a050" />} /></Cell>
                    <CaretCell w="w-[15px]" label="三维捕捉选项" />
                    <Sep />
                    <Cell w="w-[23px]" label="动态UCS"><Glyph d="M3 0v13h13M0 3l3-3 3 3M12 1L8 7h5l-4 6" /></Cell>
                    <Cell w="w-[25px]" label="选择过滤"><Glyph d="M2 5l4-4h9v8l-4 5H2zM2 5h9v9M11 5l4-4" /></Cell>
                    <CaretCell w="w-[14px]" label="过滤选项" />
                    <Cell w="w-[24px]" blue label="小控件"><Glyph d="M8 1L3 5v7l5 3 5-3V5zM8 1v7l-7 5M8 8l7 5" /></Cell>
                    <CaretCell w="w-[16px]" label="小控件选项" />
                    <Sep />
                    <Cell w="w-[23px]" blue label="注释可见性"><Glyph d={compass} extra={<><path d="M7 3h2l5 12h-3l-3-5-3 5H2z" fill="#eee" /><circle cx="13" cy="3" r="2.500" /></>} /></Cell>
                    <Cell w="w-[26px]" label="自动缩放"><Glyph d="M13 0l-2 4h4l-3 4" extra={<path d="M6 2l5 13H9l-2-4-4 4H1z" fill="#dcdcdc" />} /></Cell>
                    <Cell w="w-[23px]" label="注释比例图标"><Glyph d={compass} extra={<path d="M7 3h2l5 12h-3l-3-5-3 5H2z" fill="#dcdcdc" />} /></Cell>
                    <button className="flex h-[25px] w-[73px] shrink-0 items-center justify-center gap-1 whitespace-nowrap">1:1 / 100%<Caret /></button>
                    <Sep />
                    <Cell w="w-[24px]" label="切换工作空间"><Gear size={16} color="#dcdcdc" hole="#3b4453" /></Cell>
                    <CaretCell w="w-[15px]" label="工作空间选项" />
                    <Sep />
                    <Cell w="w-[22px]" label="注释监视器"><Glyph d="M8 0v16M0 8h16" extra={<path d="M8 0v16M0 8h16" />} /></Cell>
                    <Sep />
                    <Cell w="w-[23px]" label="单位"><svg width="9" height="16" viewBox="0 0 9 16"><path d="M0 0h4v16H0zM4 1h5v1H4zM4 5h3v1H4zM4 9h5v1H4zM4 13h3v1H4z" fill="#dcdcdc" /></svg></Cell>
                    <div className="relative h-[25px] w-[73px] shrink-0">
                         <select aria-label="单位格式" className="h-[25px] w-full appearance-none pl-[5px]"><option>小数</option></select>
                         <span className="pointer-events-none absolute top-[10px] right-1"><Caret /></span>
                    </div>
                    <Cell w="w-[26px] border-x-2 border-[#212830]" label="快捷特性"><Glyph d="M2 1h12v14H2zM2 4h12M4 7h2M7 7h5M4 10h2M7 10h5M4 13h2M7 13h5" /></Cell>
                    <Cell w="w-[25px]" label="锁定界面"><Glyph d="M8 12H1V1h13v5M1 3.500h13" extra={<path d="M9 10h6v6H9zM10 10V8q2-2 4 0" fill="#dcdcdc" />} /></Cell>
                    <CaretCell w="w-[18px]" label="锁定选项" />
                    <Cell w="w-[25px]" label="隔离对象"><Glyph d="M1 1h6v6H1zM5 15l3-5 3 5M10 6a2.500 2.500 0 1 0 5 0 2.500 2.500 0 1 0-5 0" /></Cell>
                    <Cell w="w-[25px]" blue label="硬件加速"><Glyph d="M1 8a7 7 0 1 0 14 0A7 7 0 1 0 1 8M6 11l6-7" extra={<circle cx="8" cy="8" r="7" fill="#7fa3c8" />} /></Cell>
                    <Cell w="w-[28px]" label="图形检查"><Glyph d="M0 4h9M3 1v8M9 4L7 2" extra={<><circle cx="10" cy="6" r="5" fill="#2f67a8" stroke="none" /><path d="M0 8h6v5H0z" fill="#e59a2c" stroke="none" /><path d="M7 11l3 4 6-6" stroke="#787a5c" strokeWidth="2.500" /></>} /></Cell>
                    <Sep />
                    <Cell w="w-[23px]" label="全屏显示"><Glyph d="M.5 2.500h15v12H.5zM9 8l3-3M9.500 5H12v2.500M7 9l-3 3M4 9.500V12h2.500" /></Cell>
                    <Cell w="w-[24px]" label="自定义状态栏"><svg width="16" height="14" viewBox="0 0 16 14"><path d="M0 1h16M0 7h16M0 13h16" stroke="#e8e8e8" strokeWidth="2" /></svg></Cell>
               </div>
          </div>
     );
}

function ModelTabs() {
     const shape = '[clip-path:polygon(0_0,100%_0,90%_85%,84%_100%,16%_100%,10%_85%)]';
     return (
          <div className="flex h-[17px] shrink-0 pl-2 leading-[15px]">
               <button className={`w-[54px] bg-[#3b4453] font-bold text-white ${shape}`}>模型</button>
               <button className={`w-12 bg-[#2c333e] text-[#b4b7bb] ${shape}`}>布局1</button>
               <button className={`w-14 bg-[#2c333e] text-[#b4b7bb] ${shape}`}>布局2</button>
               <button aria-label="新建布局" className="ml-1 flex h-[15px] w-6 items-center justify-center rounded-md bg-[#2c333e]"><Plus /></button>
          </div>
     );
}

function App() {
     return (
          <div className="flex h-screen flex-col overflow-hidden bg-[#3b4453] font-['Noto_Sans_CJK_SC',sans-serif] text-xs leading-[18px] text-[#f0f0f0]">
               <header className="flex shrink-0 bg-[#212830]">
                    <Ribbon />
                    <SideTools />
               </header>
               <FileTabs />
               <div className="h-1 shrink-0" />
               <ToolBar />
               <div className="h-1 shrink-0" />
               <div className="flex min-h-0 flex-1 gap-[2px]">
                    <ViewPanel />
                    <main className="flex min-w-0 flex-1 flex-col">
                         <Viewport />
                         <CommandLine />
                    </main>
               </div>
               <footer className="mt-[2px] flex h-5 shrink-0 bg-[#212830]">
                    <ModelTabs />
                    <StatusBar />
               </footer>
          </div>
     );
}

export default App;
